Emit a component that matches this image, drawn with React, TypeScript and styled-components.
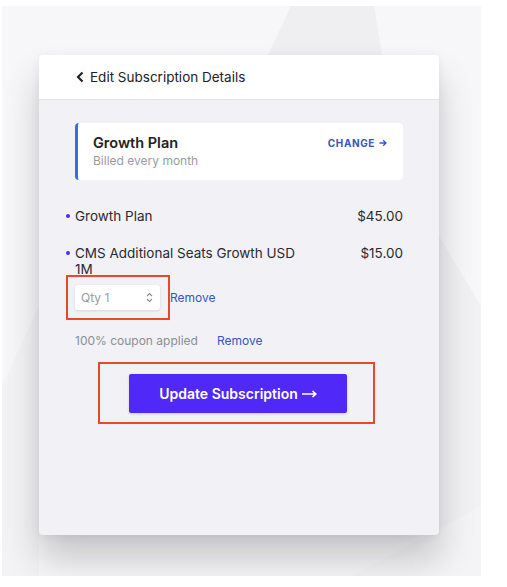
import styled, { createGlobalStyle } from "styled-components";

const GlobalStyle = createGlobalStyle`
  html, body { margin: 0; padding: 0; background: #fff; }
  body { font-family: Inter, "Noto Sans", sans-serif; -webkit-font-smoothing: antialiased; }
`;

const Page = styled.div`
  width: 507px;
  height: 587px;
  padding: 6px 0 0 2px;
  box-sizing: border-box;
`;

const Backdrop = styled.div`
  position: relative;
  width: 479px;
  height: 570px;
  background: #f7f7f9;
  overflow: hidden;
  padding: 49px 0 0 37px;
  box-sizing: border-box;
`;

const Shapes = styled.svg`
  position: absolute;
  inset: 0;
`;

const Card = styled.div`
  position: relative;
  width: 400px;
  height: 480px;
  border-radius: 4px;
  background: #f2f2f6;
  box-shadow: 0 24px 36px rgba(0, 0, 0, 0.2), 0 2px 10px rgba(0, 0, 0, 0.06);
  display: flex;
  flex-direction: column;
  overflow: hidden;
`;

const Header = styled.div`
  height: 44px;
  background: #fff;
  border-bottom: 1px solid #e2e2e8;
  display: flex;
  align-items: center;
  gap: 6px;
  padding-left: 37px;
  font-size: 13.5px;
  color: #222;
`;

const Body = styled.div`
  padding: 23px 36px 0 36px;
  display: flex;
  flex-direction: column;
`;

const PlanCard = styled.div`
  height: 57px;
  box-sizing: border-box;
  background: #fff;
  border-radius: 4px;
  border-left: 3px solid #3d67ec;
  padding: 11px 16px 0 15px;
  display: flex;
  align-items: flex-start;
  justify-content: space-between;
`;

const PlanName = styled.div`
  font-size: 14.5px;
  font-weight: 600;
  color: #222;
  line-height: 18px;
`;

const PlanSub = styled.div`
  font-size: 12px;
  color: #9a9a9f;
  line-height: 16px;
  margin-top: 1px;
`;

const ChangeLink = styled.a`
  font-size: 10px;
  font-weight: 700;
  letter-spacing: 0.6px;
  color: #3654c4;
  line-height: 18px;
  display: flex;
  align-items: center;
  gap: 4px;
`;

const Items = styled.div`
  margin-top: 28px;
  display: flex;
  flex-direction: column;
  gap: 21px;
`;

const Item = styled.div`
  display: flex;
  justify-content: space-between;
  align-items: flex-start;
  font-size: 13.5px;
  line-height: 16px;
  color: #2a2a2e;
`;

const ItemName = styled.div`
  position: relative;
  width: 232px;
  &::before {
    content: "";
    position: absolute;
    left: -9px;
    top: 6px;
    width: 4px;
    height: 4px;
    border-radius: 50%;
    background: #4f2cf5;
  }
`;

const Price = styled.div`
  font-size: 13.5px;
`;

const QtyRow = styled.div`
  display: flex;
  align-items: center;
  margin: -2px 0 0 -9px;
`;

const Highlight = styled.div<{ $pad: string }>`
  border: 2px solid #e9492b;
  padding: ${(p) => p.$pad};
  display: flex;
  justify-content: center;
`;

const Select = styled.div`
  width: 85px;
  height: 25px;
  box-sizing: border-box;
  background: #fff;
  border-radius: 3px;
  box-shadow: 0 1px 3px rgba(0, 0, 0, 0.12);
  display: flex;
  align-items: center;
  justify-content: space-between;
  padding: 0 7px 0 6px;
  font-size: 12px;
  color: #9a9a9f;
`;

const Remove = styled.a`
  font-size: 12px;
  color: #3654c4;
`;

const Coupon = styled.div`
  margin-top: 13px;
  display: flex;
  gap: 19px;
  font-size: 12px;
  line-height: 16px;
  color: #8d8d93;
`;

const ButtonWrap = styled.div`
  margin: 13px 0 0 23px;
  width: 277px;
`;

const Button = styled.button`
  width: 218px;
  height: 39px;
  border: none;
  border-radius: 2px;
  background: #5028f7;
  color: #fff;
  font-family: Inter, "Noto Sans", sans-serif;
  font-size: 14px;
  font-weight: 600;
  box-shadow: 0 1px 3px rgba(0, 0, 0, 0.15);
  display: flex;
  align-items: center;
  justify-content: center;
  gap: 4px;
`;

export default function App() {
  return (
    <>
      <GlobalStyle />
      <Page>
        <Backdrop>
          <Shapes width="479" height="570">
            <polygon points="289,0 372,0 380,49 266,49" fill="#efeff1" />
            <polygon points="0,380 37,300 37,570 0,570" fill="#f3f3f5" />
            <polygon points="437,230 479,300 479,570 437,570" fill="#f1f1f3" />
            <polygon points="350,570 479,500 479,570" fill="#f4f4f6" />
          </Shapes>
          <Card>
            <Header>
              <svg width="8" height="12" viewBox="0 0 8 12">
                <polyline points="6.5,1.5 2,6 6.5,10.5" fill="none" stroke="#222" strokeWidth="2.2" />
              </svg>
              Edit Subscription Details
            </Header>
            <Body>
              <PlanCard>
                <div>
                  <PlanName>Growth Plan</PlanName>
                  <PlanSub>Billed every month</PlanSub>
                </div>
                <ChangeLink>
                  CHANGE
                  <svg width="8" height="8" viewBox="0 0 8 8">
                    <path d="M0.5 4H7M4.2 1.2L7 4L4.2 6.8" fill="none" stroke="#3654c4" strokeWidth="1.3" />
                  </svg>
                </ChangeLink>
              </PlanCard>
              <Items>
                <Item>
                  <ItemName>Growth Plan</ItemName>
                  <Price>$45.00</Price>
                </Item>
                <div>
                  <Item>
                    <ItemName>CMS Additional Seats Growth USD 1M</ItemName>
                    <Price>$15.00</Price>
                  </Item>
                  <QtyRow>
                    <Highlight $pad="8px 8px 8px 7px">
                      <Select>
                        Qty 1
                        <svg width="7" height="11" viewBox="0 0 7 11">
                          <path d="M1 4L3.5 1.5L6 4M1 7L3.5 9.5L6 7" fill="none" stroke="#8d8d93" strokeWidth="1.1" />
                        </svg>
                      </Select>
                    </Highlight>
                    <Remove>Remove</Remove>
                  </QtyRow>
                </div>
              </Items>
              <Coupon>
                <span>100% coupon applied</span>
                <Remove>Remove</Remove>
              </Coupon>
              <ButtonWrap>
                <Highlight $pad="10px 26px 9px 29px">
                  <Button>
                    Update Subscription
                    <svg width="15" height="8" viewBox="0 0 15 8">
                      <path d="M0 4H13.5M10.5 1L13.8 4L10.5 7" fill="none" stroke="#fff" strokeWidth="1.6" />
                    </svg>
                  </Button>
                </Highlight>
              </ButtonWrap>
            </Body>
          </Card>
        </Backdrop>
      </Page>
    </>
  );
}
